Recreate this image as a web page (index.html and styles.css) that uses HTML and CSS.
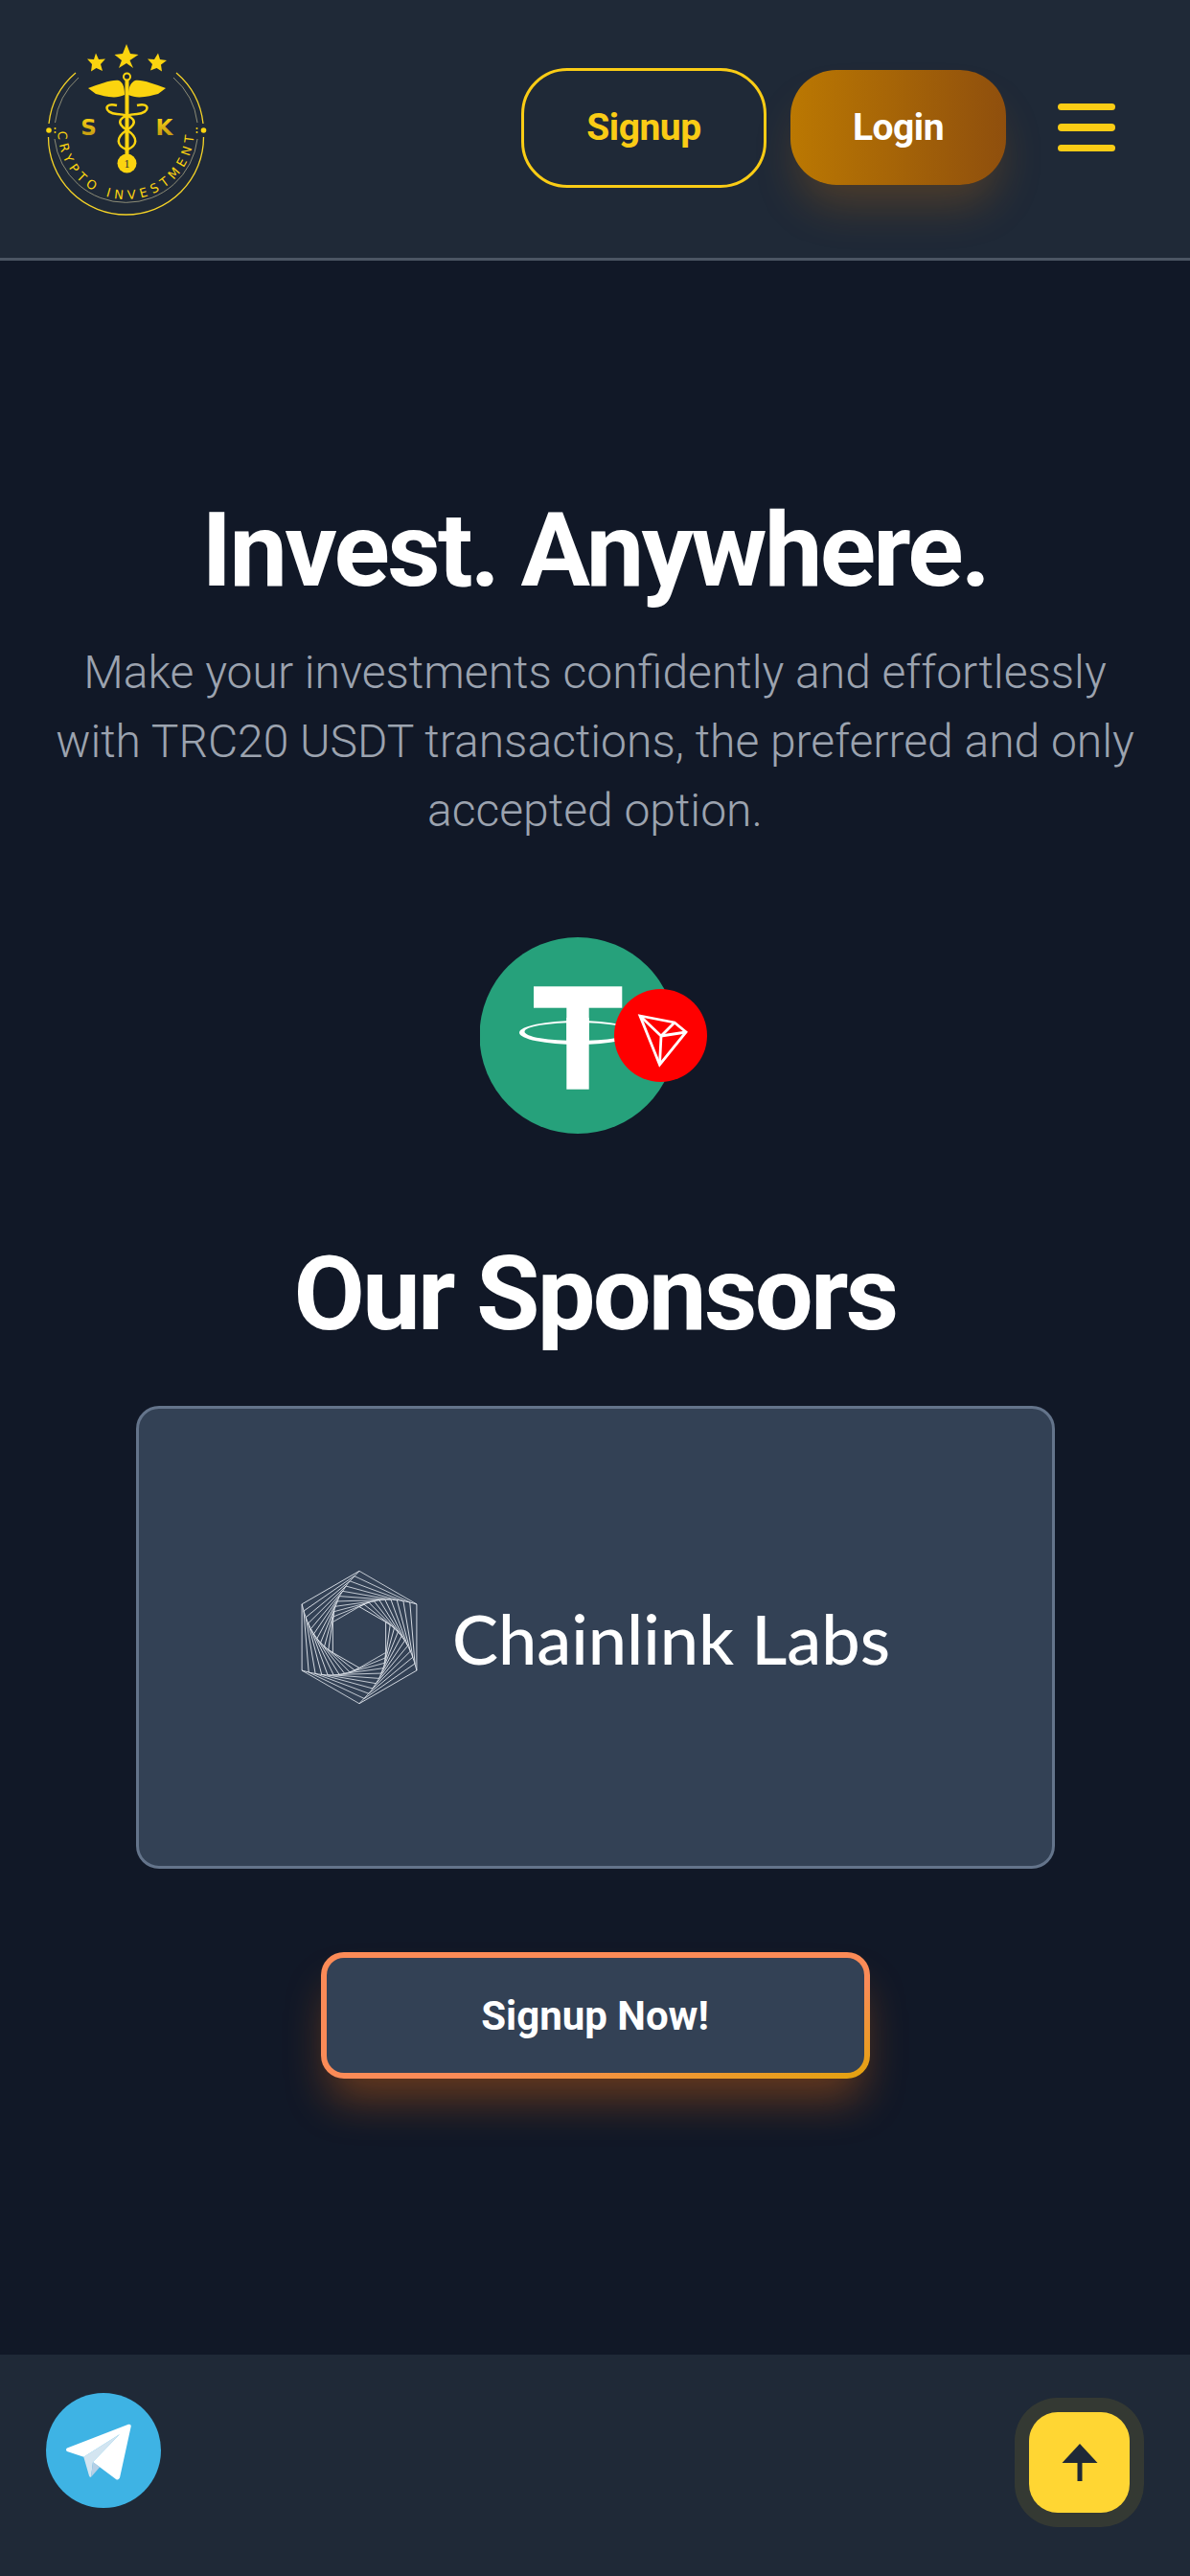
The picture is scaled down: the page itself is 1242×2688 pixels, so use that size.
FILE: index.html
```html
<!DOCTYPE html>
<html lang="en">
<head>
    <meta charset="UTF-8">
    <meta name="viewport" content="width=device-width, initial-scale=1.0">
    <title>SK Crypto Investment</title>
    <link rel="stylesheet" href="styles.css">
</head>
<body>

    <header class="top-bar">
        <!-- Logo -->
        <svg class="logo" viewBox="42 40 180 190" aria-label="SK Crypto Investment">
            <defs>
                <linearGradient id="letter-fill" x1="0" y1="0" x2="0" y2="1">
                    <stop offset="0" stop-color="#ffd814"/>
                    <stop offset="1" stop-color="#b98f10"/>
                </linearGradient>
            </defs>
            <!-- stars -->
            <polygon fill="#fbd40f" points="132,48 136,58 144.500,59 135.500,65 139,73 132,68 124,73 127,65 119.500,59 128,58"/>
            <polygon fill="#fbd40f" points="100,57.500 103,64 110,63.500 105,69 107,76 100.500,73 95,76.500 96,69 91,63.500 98,64"/>
            <polygon fill="#fbd40f" points="165,57.500 167,64 174,65 168,69.500 169,76.500 163.500,73 157,75.500 159,69 154,63.500 161,64"/>
            <!-- rings -->
            <g fill="none" stroke="#f5d327" stroke-width="1.300">
                <path d="M 79 78 A 81 81 0 0 0 51 131"/>
                <path d="M 184 78 A 81 81 0 0 1 212 131"/>
                <path d="M 50.500 145 A 81 81 0 0 0 212.500 145"/>
            </g>
            <g fill="none" stroke="#a7a586" stroke-width="0.800">
                <path d="M 82 83 A 75 75 0 0 0 57.500 130"/>
                <path d="M 181 83 A 75 75 0 0 1 206 130"/>
                <path d="M 57 147 A 75 75 0 0 0 206 147"/>
            </g>
            <g fill="#fbd40f">
                <circle cx="51" cy="138" r="2.800"/>
                <circle cx="212.500" cy="138" r="2.800"/>
                <circle cx="57.500" cy="136" r="1"/>
                <circle cx="57.500" cy="140" r="1"/>
                <circle cx="205.500" cy="136" r="1"/>
                <circle cx="205.500" cy="140" r="1"/>
            </g>
            <!-- wings and staff -->
            <path fill="#fbd40f" d="M 92 94 C 104 90 116 85 124 86 C 128 88 130 92 130 101 C 120 106 108 102 100 100 Z"/>
            <path fill="#fbd40f" d="M 173 94 C 161 90 149 85 141 86 C 137 88 134 92 134 101 C 144 106 157 102 165 100 Z"/>
            <circle cx="132.500" cy="82" r="3.500" fill="none" stroke="#fbd40f" stroke-width="2"/>
            <rect x="130.500" y="85" width="4" height="80" fill="#fbd40f"/>
            <circle cx="132.500" cy="172.500" r="10" fill="#fbd40f"/>
            <text class="logo-coin" x="132.500" y="177">1</text>
            <!-- snakes -->
            <g fill="none" stroke="#fbd40f" stroke-width="2.500">
                <path d="M 122 112 C 108 108 108 120 122 121 C 140 122 146 130 132 138 C 120 146 122 154 132 158"/>
                <path d="M 143 112 C 157 108 157 120 143 121 C 125 122 119 130 133 138 C 145 146 143 154 133 158"/>
            </g>
            <!-- letters -->
            <text class="logo-letter" x="92.500" y="143">S</text>
            <text class="logo-letter" x="171.500" y="143">K</text>
            <path id="logo-arc" fill="none" d="M 60.500 139 A 71 71 0 0 0 202.500 139"/>
            <text class="logo-arc-text"><textPath href="#logo-arc" textLength="218">CRYPTO INVESTMENT</textPath></text>
        </svg>

        <nav class="top-actions">
            <a class="btn-signup" href="#">Signup</a>
            <a class="btn-login" href="#">Login</a>
            <button class="menu-toggle" aria-label="Menu">
                <span></span>
                <span></span>
                <span></span>
            </button>
        </nav>
    </header>

    <main class="content">
        <h1 class="big-title">Invest. Anywhere.</h1>
        <p class="lead-text">Make your investments confidently and effortlessly with TRC20 USDT transactions, the preferred and only accepted option.</p>

        <!-- USDT with the TRON badge, drawn in page coordinates -->
        <svg class="coin-icon" viewBox="501 978 240 205" aria-label="USDT on TRON">
            <circle cx="603" cy="1080.500" r="102.500" fill="#26a17b"/>
            <rect x="557" y="1029.300" width="92.300" height="22.400" fill="#fff"/>
            <rect x="591.300" y="1051" width="23.400" height="85.700" fill="#fff"/>
            <path fill="#fff" fill-rule="evenodd" d="M 542 1077.500 A 61 12.500 0 1 1 664 1077.500 A 61 12.500 0 1 1 542 1077.500 Z M 547.500 1076.500 A 55.500 9.500 0 1 0 658.500 1076.500 A 55.500 9.500 0 1 0 547.500 1076.500 Z"/>
            <rect x="591.300" y="1062" width="23.400" height="24" fill="#fff"/>
            <circle cx="689.500" cy="1080.500" r="48.500" fill="#ff0000"/>
            <g fill="none" stroke="#fff" stroke-width="2.800" stroke-linejoin="miter">
                <path d="M 668 1060 L 704 1067 L 716 1077 L 688.500 1111 Z"/>
                <path d="M 668 1060 L 690 1081 L 688.500 1111"/>
                <path d="M 690 1081 L 716 1077"/>
                <path d="M 690 1081 L 704 1067"/>
            </g>
        </svg>

        <h2 class="big-title sponsors-title">Our Sponsors</h2>

        <div class="sponsor-card">
            <svg class="chainlink-mark" viewBox="-186 -212 372 424" aria-hidden="true">
                <defs>
                    <path id="fan" d="M 0 -208 L 180.100 -104 M -15.800 -192.400 L 158.700 -109.900 M -29.900 -176.600 L 138 -114.200 M -42.300 -160.800 L 118.100 -117 M -53.100 -145 L 99 -118.500 M -62.300 -129 L 80.600 -118.500 M -69.700 -113 L 63 -116.900 M -75.500 -96.800 L 46 -113.800 M -79.700 -80.600 L 29.900 -109.300 M -82.200 -64.400 L 14.700 -103.400 M -83 -48 L 0 -96 M 0 -208 Q -83 -130 -83 -48"/>
                </defs>
                <g fill="none" stroke="#e6ebf1" stroke-width="2.400">
                    <use href="#fan"/>
                    <use href="#fan" transform="rotate(60)"/>
                    <use href="#fan" transform="rotate(120)"/>
                    <use href="#fan" transform="rotate(180)"/>
                    <use href="#fan" transform="rotate(240)"/>
                    <use href="#fan" transform="rotate(300)"/>
                </g>
            </svg>
            <span class="chainlink-name">Chainlink Labs</span>
        </div>

        <a class="btn-join" href="#">Signup Now!</a>
    </main>

    <footer class="bottom-bar">
        <a class="telegram-link" href="#" aria-label="Telegram">
            <svg viewBox="0 0 120 120">
                <circle cx="60" cy="60" r="60" fill="#3eb3e4"/>
                <path fill="#d3e5f1" d="M 39.300 66.700 L 77 43 L 49 72 L 47 87.700 Q 45.500 88 45 86.500 Z"/>
                <path fill="#b6cfe5" d="M 47 87.700 L 49 72 L 56 77.500 Z"/>
                <path fill="#fff" d="M 22 57.500 L 86 32.800 Q 89 32 88.700 35 L 77 88.500 Q 75.500 91.500 73 90 L 49 72 L 77 43 L 39.300 66.700 L 22 61 Q 20 59 22 57.500 Z"/>
            </svg>
        </a>
        <button class="to-top" aria-label="Back to top">
            <svg viewBox="0 0 38 40">
                <polygon points="19,0 37.500,20 0.500,20" fill="#1f2937"/>
                <rect x="16.500" y="19" width="5" height="20" fill="#1f2937"/>
            </svg>
        </button>
    </footer>

</body>
</html>
```

FILE: styles.css
```css
/* Basic styling */
* {
    box-sizing: border-box;
}

body {
    margin: 0;
    background-color: #111827;
    font-family: Roboto, "Liberation Sans", sans-serif;
    color: #fff;
}

/* Top bar */
.top-bar {
    display: flex;
    justify-content: space-between;
    align-items: center;
    height: 272px;
    padding: 0 78px 3px 42px;
    background-color: #1f2937;
    border-bottom: 3px solid #4b5563;
}

.logo {
    width: 180px;
    height: 190px;
}

.logo-letter {
    font-family: "DejaVu Sans", sans-serif;
    font-size: 23px;
    font-weight: bold;
    text-anchor: middle;
    fill: url(#letter-fill);
}

.logo-coin {
    font-family: "Liberation Serif", serif;
    font-size: 12px;
    text-anchor: middle;
    fill: #1f2937;
}

.logo-arc-text {
    font-family: "DejaVu Sans", sans-serif;
    font-size: 13px;
    fill: #fbd40f;
}

.top-actions {
    display: flex;
    align-items: center;
}

.btn-signup,
.btn-login {
    display: flex;
    justify-content: center;
    align-items: center;
    font-size: 39px;
    font-weight: bold;
    letter-spacing: -0.5px;
    text-decoration: none;
    border-radius: 48px;
}

.btn-signup {
    width: 256px;
    height: 125px;
    margin-right: 25px;
    color: #facc15;
    border: 3px solid #facc15;
}

.btn-login {
    width: 225px;
    height: 120px;
    margin-right: 54px;
    color: #fff;
    background: linear-gradient(90deg, #bb7802, #8f4f0d);
    box-shadow: 0 30px 45px -9px rgba(217, 119, 6, 0.25);
}

.menu-toggle {
    display: flex;
    flex-direction: column;
    gap: 14px;
    width: 60px;
    padding: 0;
    background: none;
    border: none;
}

.menu-toggle span {
    height: 7.500px;
    background-color: #facc15;
    border-radius: 4px;
}

/* Main column */
.content {
    display: flex;
    flex-direction: column;
    align-items: center;
    padding: 242px 48px 288px;
}

.big-title {
    margin: 0;
    font-size: 108px;
    line-height: 120px;
    font-weight: bold;
    letter-spacing: -2.700px;
    text-align: center;
}

.lead-text {
    margin: 32px 0 96px;
    font-size: 48px;
    line-height: 72px;
    font-weight: 300;
    color: #9ca3af;
    text-align: center;
}

.coin-icon {
    width: 240px;
    height: 205px;
    margin-bottom: 107px;
}

.sponsors-title {
    margin-bottom: 57px;
}

.sponsor-card {
    display: flex;
    justify-content: center;
    align-items: center;
    gap: 35px;
    width: 959px;
    height: 483px;
    background-color: #334155;
    border: 3px solid #64748b;
    border-radius: 24px;
}

.chainlink-mark {
    width: 124px;
    height: 141px;
}

.chainlink-name {
    font-family: Lato, sans-serif;
    font-size: 72px;
    font-weight: 500;
    color: #fff;
}

.btn-join {
    display: flex;
    justify-content: center;
    align-items: center;
    width: 573px;
    height: 132px;
    margin-top: 87px;
    font-size: 42px;
    font-weight: bold;
    color: #fff;
    text-decoration: none;
    border: 6px solid transparent;
    border-radius: 24px;
    background: linear-gradient(#334155, #334155) padding-box, linear-gradient(to bottom right, #fb8b57 62%, #e3a30d 100%) border-box;
    box-shadow: 0 30px 45px -9px rgba(234, 108, 16, 0.4);
}

/* Bottom bar */
.bottom-bar {
    display: flex;
    justify-content: space-between;
    align-items: flex-start;
    height: 231px;
    padding: 40px 48px 0;
    background-color: #1f2937;
}

.telegram-link {
    display: block;
    width: 120px;
    height: 120px;
}

.to-top {
    display: flex;
    justify-content: center;
    align-items: center;
    width: 105px;
    height: 105px;
    margin: 20px 15px 0 0;
    padding: 0;
    background-color: #ffd633;
    border: none;
    border-radius: 30px;
    box-shadow: 0 0 0 15px rgba(250, 204, 21, 0.1);
}

.to-top svg {
    width: 38px;
    height: 40px;
}
```
